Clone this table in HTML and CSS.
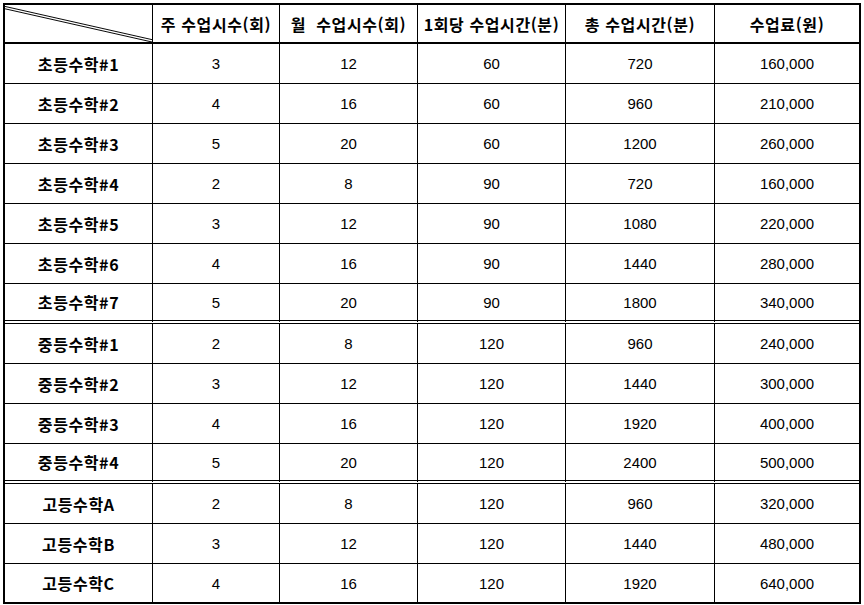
FILE: index.html
```html
<!DOCTYPE html>
<html lang="ko">
<head>
<meta charset="utf-8">
<link rel="stylesheet" href="styles.css">
</head>
<body>
<table class="fee">
  <colgroup>
    <col class="c0"><col class="c1"><col class="c2"><col class="c3"><col class="c4"><col class="c5">
  </colgroup>
  <thead>
    <tr class="head">
      <th class="diag">
        <svg class="diag-svg" viewBox="0 0 148 39" preserveAspectRatio="none">
          <line x1="0" y1="1.5" x2="148" y2="36.5" stroke="#000" stroke-width="1"/>
          <line x1="0" y1="4" x2="148" y2="39" stroke="#000" stroke-width="1"/>
        </svg>
      </th>
      <th>주 수업시수(회)</th>
      <th>월&nbsp;&nbsp;수업시수(회)</th>
      <th>1회당 수업시간(분)</th>
      <th>총 수업시간(분)</th>
      <th>수업료(원)</th>
    </tr>
  </thead>
  <tbody>
    <tr><th>초등수학#1</th><td>3</td><td>12</td><td>60</td><td>720</td><td>160,000</td></tr>
    <tr><th>초등수학#2</th><td>4</td><td>16</td><td>60</td><td>960</td><td>210,000</td></tr>
    <tr><th>초등수학#3</th><td>5</td><td>20</td><td>60</td><td>1200</td><td>260,000</td></tr>
    <tr><th>초등수학#4</th><td>2</td><td>8</td><td>90</td><td>720</td><td>160,000</td></tr>
    <tr><th>초등수학#5</th><td>3</td><td>12</td><td>90</td><td>1080</td><td>220,000</td></tr>
    <tr><th>초등수학#6</th><td>4</td><td>16</td><td>90</td><td>1440</td><td>280,000</td></tr>
    <tr class="group-end"><th>초등수학#7</th><td>5</td><td>20</td><td>90</td><td>1800</td><td>340,000</td></tr>
    <tr><th>중등수학#1</th><td>2</td><td>8</td><td>120</td><td>960</td><td>240,000</td></tr>
    <tr><th>중등수학#2</th><td>3</td><td>12</td><td>120</td><td>1440</td><td>300,000</td></tr>
    <tr><th>중등수학#3</th><td>4</td><td>16</td><td>120</td><td>1920</td><td>400,000</td></tr>
    <tr class="group-end"><th>중등수학#4</th><td>5</td><td>20</td><td>120</td><td>2400</td><td>500,000</td></tr>
    <tr><th>고등수학A</th><td>2</td><td>8</td><td>120</td><td>960</td><td>320,000</td></tr>
    <tr><th>고등수학B</th><td>3</td><td>12</td><td>120</td><td>1440</td><td>480,000</td></tr>
    <tr class="last"><th>고등수학C</th><td>4</td><td>16</td><td>120</td><td>1920</td><td>640,000</td></tr>
  </tbody>
</table>
</body>
</html>
```
FILE: styles.css
```css
html, body {
  margin: 0;
  padding: 0;
  background: #fff;
}
body {
  padding: 3px 0 0 3px;
}
.fee {
  border-collapse: separate;
  border-spacing: 0;
  table-layout: fixed;
  width: 858px;
  border: 2px solid #000;
  font-family: "Liberation Sans", "Noto Sans CJK KR", sans-serif;
  color: #000;
}
.c0 { width: 148px; }
.c1 { width: 127px; }
.c2 { width: 138px; }
.c3 { width: 148px; }
.c4 { width: 149px; }
.c5 { width: 144px; }

.fee th, .fee td {
  padding: 0;
  text-align: center;
  vertical-align: middle;
  border-right: 1px solid #000;
  border-bottom: 1px solid #000;
  box-sizing: border-box;
  height: 40px;
  white-space: nowrap;
}
.fee th:last-child, .fee td:last-child {
  border-right: 0;
}
.fee th {
  font-family: "Noto Sans CJK KR", sans-serif;
  font-weight: 700;
  font-size: 16px;
  letter-spacing: 0.6px;
}
.fee td {
  font-size: 15px;
  font-weight: 400;
}
.head th {
  height: 39px;
  border-bottom: 2px solid #000;
}
.diag {
  position: relative;
}
.diag-svg {
  position: absolute;
  left: 0;
  top: 0;
  width: 100%;
  height: 100%;
  display: block;
}
.group-end th, .group-end td {
  border-bottom: 4px double #000;
}
.last th, .last td {
  border-bottom: 0;
  height: 38px;
}
```
